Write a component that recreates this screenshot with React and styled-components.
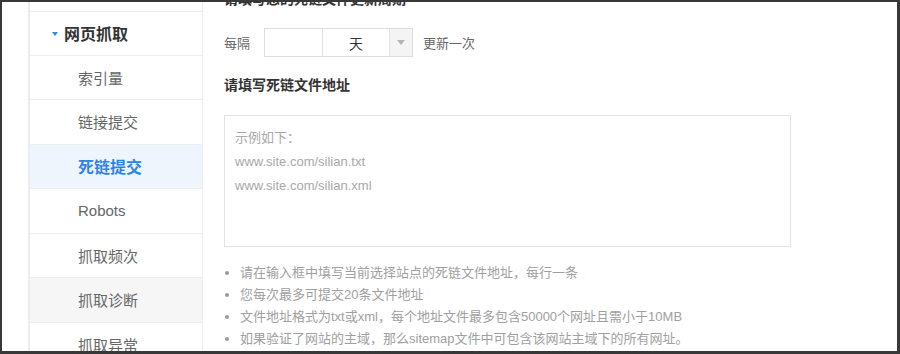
import React from "react";
import styled, { createGlobalStyle } from "styled-components";

const Global = createGlobalStyle`
  html, body { margin: 0; padding: 0; background: #fff; }
  body { font-family: "Liberation Sans", "Noto Sans CJK SC", sans-serif; }
  * { box-sizing: border-box; }
`;

const Frame = styled.div`
  width: 900px;
  height: 354px;
  border-style: solid;
  border-color: #383838;
  border-width: 2px 3px 3px 2px;
  background: #fff;
  display: flex;
  overflow: hidden;
  padding-left: 26px;
`;

const Sidebar = styled.nav`
  width: 175px;
  flex: none;
  border-left: 2px solid #ececec;
  border-right: 1px solid #ececec;
  padding-top: 9px;
  display: flex;
  flex-direction: column;
`;

const Group = styled.div`
  height: 44.5px;
  flex: none;
  border-top: 1px solid #ededed;
  border-bottom: 1px solid #ededed;
  display: flex;
  align-items: center;
  padding-left: 22px;
  gap: 6px;
  font-size: 16px;
  font-weight: bold;
  color: #333;
`;

const Caret = styled.span`
  width: 0;
  height: 0;
  border-left: 3.5px solid transparent;
  border-right: 3.5px solid transparent;
  border-top: 4px solid #2f8ae5;
  margin-top: 1px;
`;

const Item = styled.div`
  height: 44.5px;
  flex: none;
  border-bottom: 1px solid #ededed;
  display: flex;
  align-items: center;
  padding-left: 48px;
  font-size: ${(p) => (p.$active ? "16px" : "15px")};
  font-weight: ${(p) => (p.$active ? "bold" : "normal")};
  color: ${(p) => (p.$active ? "#2d84e6" : "#666")};
  background: ${(p) => (p.$active ? "#eef5fd" : p.$hover ? "#f6f6f6" : "#fff")};
`;

const Main = styled.main`
  margin-left: 21px;
  width: 567px;
  flex: none;
  display: flex;
  flex-direction: column;
  margin-top: -13px;
`;

const Heading = styled.h3`
  margin: ${(p) => p.$mt || 0}px 0 0;
  font-size: 14px;
  line-height: 20px;
  font-weight: bold;
  color: #333;
`;

const Row = styled.div`
  margin-top: 19px;
  height: 29px;
  display: flex;
  align-items: center;
  font-size: 13px;
  color: #666;
`;

const Picker = styled.div`
  margin: 0 10px 0 14px;
  height: 29px;
  display: flex;
  border: 1px solid #dcdcdc;
`;

const NumInput = styled.input`
  width: 58px;
  height: 100%;
  border: none;
  border-right: 1px solid #e2e2e2;
  outline: none;
  padding: 0 6px;
  font: inherit;
`;

const UnitBox = styled.div`
  width: 67px;
  display: flex;
  align-items: center;
  justify-content: center;
  font-size: 14px;
  color: #333;
  border-right: 1px solid #e2e2e2;
`;

const ArrowBox = styled.div`
  width: 22px;
  background: #f4f4f4;
  display: flex;
  align-items: center;
  justify-content: center;
  &::after {
    content: "";
    border-left: 4px solid transparent;
    border-right: 4px solid transparent;
    border-top: 5px solid #b5b5b5;
  }
`;

const Area = styled.textarea`
  margin-top: 20px;
  width: 567px;
  height: 132px;
  border: 1px solid #e3e3e3;
  padding: 10px 10px;
  resize: none;
  outline: none;
  font-family: "Liberation Sans", "Noto Sans CJK SC", sans-serif;
  font-size: 13px;
  line-height: 24px;
  color: #333;
  &::placeholder {
    color: #a8a8a8;
  }
`;

const Tips = styled.ul`
  margin: 15px 0 0;
  padding: 0;
  list-style: none;
  font-size: 13px;
  line-height: 22px;
  color: #a0a0a0;
  white-space: nowrap;
`;

const Tip = styled.li`
  position: relative;
  padding-left: 16px;
  &::before {
    content: "";
    position: absolute;
    left: 1px;
    top: 9px;
    width: 4px;
    height: 4px;
    border-radius: 50%;
    background: #9a9a9a;
  }
`;

const items = [
  { label: "索引量" },
  { label: "链接提交" },
  { label: "死链提交", active: true },
  { label: "Robots" },
  { label: "抓取频次" },
  { label: "抓取诊断", hover: true },
  { label: "抓取异常" },
];

const tips = [
  "请在输入框中填写当前选择站点的死链文件地址，每行一条",
  "您每次最多可提交20条文件地址",
  "文件地址格式为txt或xml，每个地址文件最多包含50000个网址且需小于10MB",
  "如果验证了网站的主域，那么sitemap文件中可包含该网站主域下的所有网址。",
];

export default function App() {
  return (
    <>
      <Global />
      <Frame>
        <Sidebar>
          <Group>
            <Caret />
            网页抓取
          </Group>
          {items.map((it) => (
            <Item key={it.label} $active={it.active} $hover={it.hover}>
              {it.label}
            </Item>
          ))}
        </Sidebar>
        <Main>
          <Heading>请填写您的死链文件更新周期</Heading>
          <Row>
            每隔
            <Picker>
              <NumInput type="text" />
              <UnitBox>天</UnitBox>
              <ArrowBox />
            </Picker>
            更新一次
          </Row>
          <Heading $mt={18}>请填写死链文件地址</Heading>
          <Area
            placeholder={
              "示例如下：\nwww.site.com/silian.txt\nwww.site.com/silian.xml"
            }
          />
          <Tips>
            {tips.map((t) => (
              <Tip key={t}>{t}</Tip>
            ))}
          </Tips>
        </Main>
      </Frame>
    </>
  );
}
